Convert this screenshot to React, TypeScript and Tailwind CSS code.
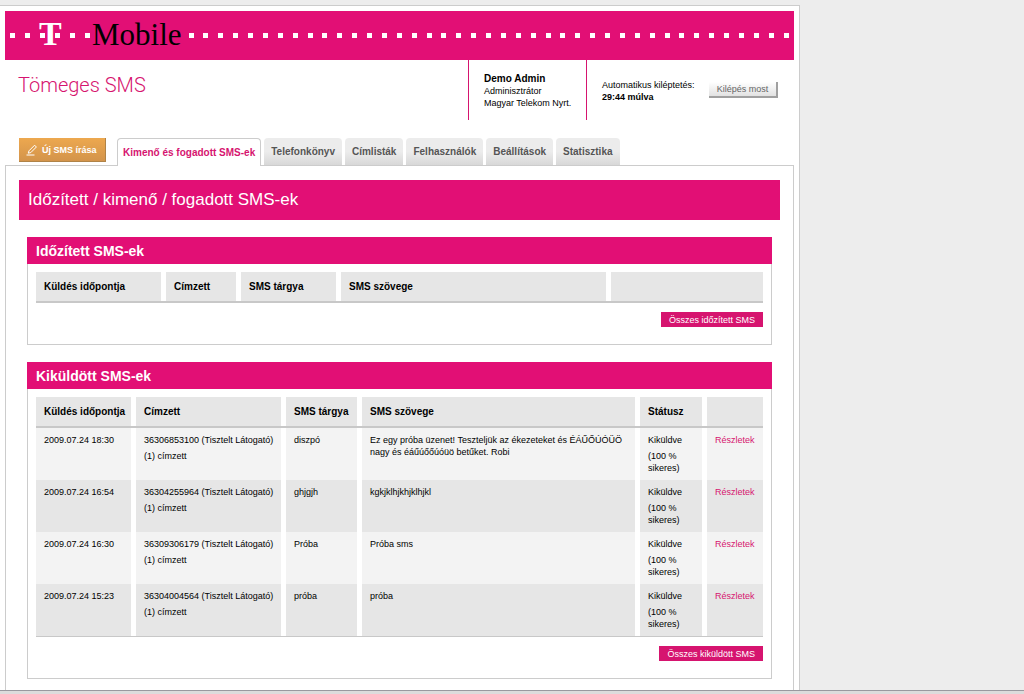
import React from 'react';

interface Message {
  date: string;
  recipient: string;
  subject: string;
  text: string;
}

const tabs = ['Kimenő és fogadott SMS-ek', 'Telefonkönyv', 'Címlisták', 'Felhasználók', 'Beállítások', 'Statisztika'];

const sentMessages: Message[] = [
  {
    date: '2009.07.24 18:30',
    recipient: '36306853100 (Tisztelt Látogató)',
    subject: 'diszpó',
    text: 'Ez egy próba üzenet! Teszteljük az ékezeteket és ÉÁŰŐÚÓÜÖ nagy és éáűúőőúóüö betűket. Robi',
  },
  { date: '2009.07.24 16:54', recipient: '36304255964 (Tisztelt Látogató)', subject: 'ghjgjh', text: 'kgkjklhjkhjklhjkl' },
  { date: '2009.07.24 16:30', recipient: '36309306179 (Tisztelt Látogató)', subject: 'Próba', text: 'Próba sms' },
  { date: '2009.07.24 15:23', recipient: '36304004564 (Tisztelt Látogató)', subject: 'próba', text: 'próba' },
];

// white strip on the right of a cell, so row lines still run through the gaps
const cellGap = 'shadow-[inset_-5px_0_0_#fff] last:shadow-none';

function Dots({ count }: { count: number }) {
  return (
    <>
      {Array.from({ length: count }, (_, i) => (
        <span key={i} className="size-[5px] shrink-0 bg-white" />
      ))}
    </>
  );
}

function BrandBar() {
  return (
    <div className="flex h-[49px] items-center bg-[#e20f75] px-[5px]">
      <div className="relative flex gap-[10px]">
        <Dots count={6} />
        <span className="absolute left-[29px] -top-[19px] font-['Liberation_Serif'] text-[34px] leading-10 font-bold text-white">
          T
        </span>
      </div>
      <span className="ml-[2px] pb-[2px] font-['Liberation_Serif'] text-[31px] leading-10 text-black">Mobile</span>
      <div className="ml-[7px] flex flex-1 justify-between">
        <Dots count={41} />
      </div>
    </div>
  );
}

function Header() {
  return (
    <header className="flex h-[60px]">
      <h1 className="flex-1 pt-[10px] pl-[13px] font-['Roboto',sans-serif] text-[20px] leading-[30px] font-light text-[#d6146f]">
        Tömeges SMS
      </h1>
      <div className="w-[118px] border-l border-[#d6146f] pt-[13px] pl-[15px] whitespace-nowrap">
        <p className="text-[10px] leading-3 font-bold">Demo Admin</p>
        <p>Adminisztrátor</p>
        <p>Magyar Telekom Nyrt.</p>
      </div>
      <div className="flex w-[208px] items-start border-l border-[#d6146f] pl-[15px]">
        <div className="w-[107px] pt-[19px]">
          <p>Automatikus kiléptetés:</p>
          <p className="font-bold">29:44 múlva</p>
        </div>
        <button
          type="button"
          className="mt-[22px] h-4 w-[69px] border-r-2 border-b-2 border-[#a0a0a0] bg-linear-to-b from-white to-[#e2e2e2] text-[#666]"
        >
          Kilépés most
        </button>
      </div>
    </header>
  );
}

function TabBar() {
  return (
    <div className="flex h-[45px] items-end pl-[14px]">
      <button
        type="button"
        className="mb-[3px] flex h-6 w-[87px] items-center gap-1 border-r border-b border-[#b08347] bg-linear-to-b from-[#eda84f] to-[#d3944b] pl-[7px] font-bold whitespace-nowrap text-white"
      >
        <svg viewBox="0 0 12 12" className="size-3 shrink-0" fill="none" stroke="currentColor">
          <path d="M2.2 9.2 3 6.8 8.6 1.2 10.4 3 4.8 8.6Z" />
          <path d="M.5 11h8" strokeWidth="1" />
        </svg>
        Új SMS írása
      </button>
      <nav className="ml-[11px] flex items-end gap-[3px] text-[10px] font-bold">
        {tabs.map((tab, i) => (
          <a
            key={tab}
            href="#"
            className={
              i === 0
                ? 'relative -mb-px h-7 rounded-t-[4px] border border-b-0 border-[#ccc] bg-white px-[5px] text-[#d6146f] leading-[27px]'
                : 'h-[27px] rounded-t-[4px] bg-linear-to-b from-[#ececec] from-50% to-[#d8d8d8] px-[7px] text-[#555] leading-[27px]'
            }
          >
            {tab}
          </a>
        ))}
      </nav>
    </div>
  );
}

function HeadCell({ children }: { children?: React.ReactNode }) {
  return (
    <th className={`h-[31px] border-b-2 border-[#c8c8c8] bg-[#e6e6e6] px-2 text-left text-[10px] leading-3 ${cellGap}`}>
      {children}
    </th>
  );
}

function Cell({ children }: { children: React.ReactNode }) {
  return <td className={`pt-[6px] pr-[13px] pb-[6px] pl-2 align-top ${cellGap}`}>{children}</td>;
}

interface PanelProps {
  title: string;
  action: string;
  children: React.ReactNode;
}

function Panel({ title, action, children }: PanelProps) {
  return (
    <section className="mx-2 mt-[17px] border border-t-0 border-[#ccc] pb-[17px]">
      <h3 className="-mx-px h-[27px] bg-[#e20f75] pl-[9px] text-[14px] leading-[28px] font-bold text-white">{title}</h3>
      <div className="px-2 pt-2">
        {children}
        <div className="mt-[9px] flex justify-end">
          <button type="button" className="h-[15px] bg-[#d6146f] px-2 text-white">
            {action}
          </button>
        </div>
      </div>
    </section>
  );
}

function ScheduledTable() {
  return (
    <table className="w-full table-fixed border-separate border-spacing-0">
      <colgroup>
        <col className="w-[130px]" />
        <col className="w-[75px]" />
        <col className="w-[100px]" />
        <col />
        <col className="w-[152px]" />
      </colgroup>
      <thead>
        <tr>
          <HeadCell>Küldés időpontja</HeadCell>
          <HeadCell>Címzett</HeadCell>
          <HeadCell>SMS tárgya</HeadCell>
          <HeadCell>SMS szövege</HeadCell>
          <HeadCell />
        </tr>
      </thead>
    </table>
  );
}

function SentTable() {
  return (
    <table className="w-full table-fixed border-separate border-spacing-0 border-b border-[#c8c8c8]">
      <colgroup>
        <col className="w-[100px]" />
        <col className="w-[150px]" />
        <col className="w-[76px]" />
        <col />
        <col className="w-[67px]" />
        <col className="w-[56px]" />
      </colgroup>
      <thead>
        <tr>
          <HeadCell>Küldés időpontja</HeadCell>
          <HeadCell>Címzett</HeadCell>
          <HeadCell>SMS tárgya</HeadCell>
          <HeadCell>SMS szövege</HeadCell>
          <HeadCell>Státusz</HeadCell>
          <HeadCell />
        </tr>
      </thead>
      <tbody>
        {sentMessages.map((message) => (
          <tr key={message.date} className="bg-[#e6e6e6] odd:bg-[#f3f3f3]">
            <Cell>{message.date}</Cell>
            <Cell>
              <p className="whitespace-nowrap">{message.recipient}</p>
              <p className="mt-1">(1) címzett</p>
            </Cell>
            <Cell>{message.subject}</Cell>
            <Cell>{message.text}</Cell>
            <Cell>
              <p>Kiküldve</p>
              <p className="mt-1">
                (100 %
                <br />
                sikeres)
              </p>
            </Cell>
            <Cell>
              <a href="#" className="text-[#d6146f]">
                Részletek
              </a>
            </Cell>
          </tr>
        ))}
      </tbody>
    </table>
  );
}

export default function App() {
  return (
    <div className="flex h-screen flex-col bg-[#ededed] font-['Liberation_Sans',Arial,sans-serif] text-[9px] leading-3 text-black">
      <div className="flex flex-1 flex-col overflow-hidden pt-[5px]">
        <div className="w-full max-w-[800px] flex-1 border-t border-r border-[#ccc] bg-white px-[5px] pt-[5px]">
          <BrandBar />
          <Header />
          <TabBar />
          <main className="h-full border border-[#ccc] px-[13px] pt-[14px]">
            <h2 className="h-10 bg-[#e20f75] pl-[9px] text-[17px] leading-10 text-white">
              Időzített / kimenő / fogadott SMS-ek
            </h2>
            <Panel title="Időzített SMS-ek" action="Összes időzített SMS">
              <ScheduledTable />
            </Panel>
            <Panel title="Kiküldött SMS-ek" action="Összes kiküldött SMS">
              <SentTable />
            </Panel>
          </main>
        </div>
      </div>
      <div className="h-[4px] shrink-0 border-t border-[#99999f] bg-[#dcdcdc]" />
    </div>
  );
}
